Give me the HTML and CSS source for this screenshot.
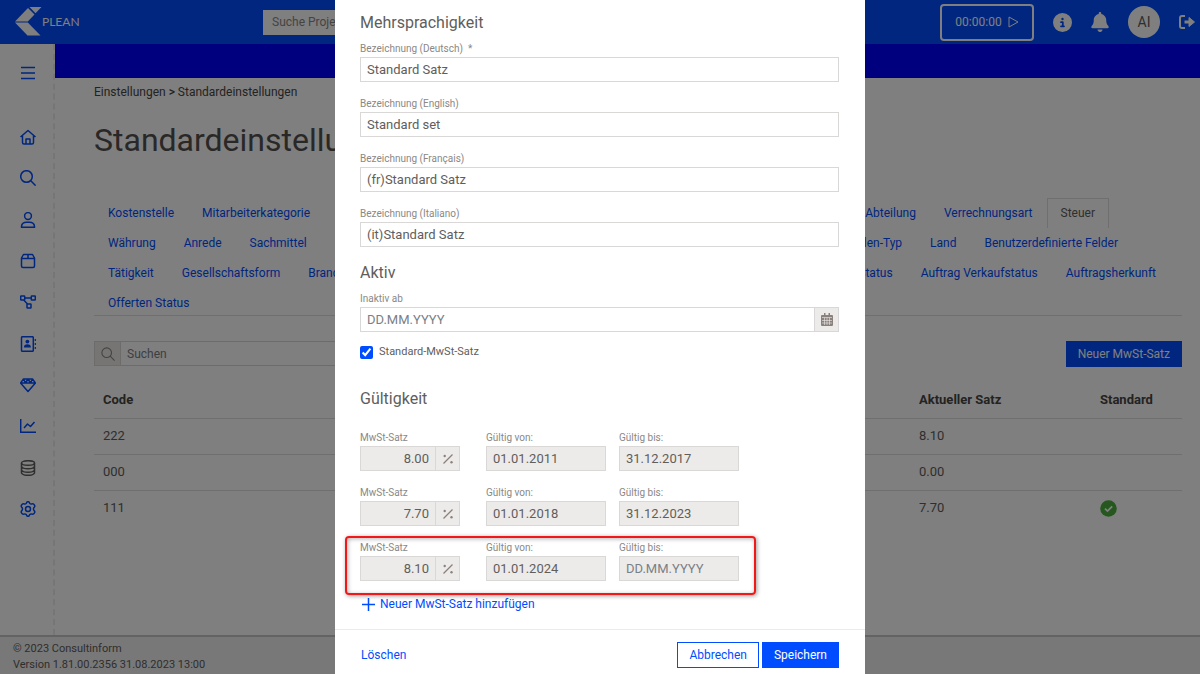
FILE: index.html
```html
<!DOCTYPE html>
<html lang="de">
<head>
<meta charset="utf-8">
<title>Plean – Standardeinstellungen</title>
<link rel="stylesheet" href="styles.css">
</head>
<body>
<div class="app">
  <header class="topbar">
    <a class="brand" href="#" aria-label="Plean">
      <svg width="27" height="30" viewBox="0 0 27 30" fill="currentColor"><path d="M14.500 0H26.500L20.500 6.200z"/><path d="M13 1L19.500 7.500 12.800 14.500H0z"/><path d="M0 15.500h12.800L25.500 28.500H12.500z"/></svg>
      <span>PLEAN</span>
    </a>
    <input class="topsearch" type="text" placeholder="Suche Projekte, Kunden" aria-label="Suche">
    <div class="tools">
      <button class="timer" type="button">00:00:00
        <svg width="11" height="12" viewBox="0 0 11 12" fill="none" stroke="currentColor"><path d="M1 1l9 5-9 5z"/></svg>
      </button>
      <button class="tool" type="button" aria-label="Info"><svg width="19" height="19" viewBox="0 0 512 512" fill="currentColor"><path d="M256 512A256 256 0 1 0 256 0a256 256 0 1 0 0 512zM216 336h24V272H216a24 24 0 0 1 0-48h48c13.300 0 24 10.700 24 24v88h8a24 24 0 0 1 0 48H216a24 24 0 0 1 0-48zm40-208a32 32 0 1 1 0 64 32 32 0 1 1 0-64z"/></svg></button>
      <button class="tool" type="button" aria-label="Mitteilungen"><svg width="18" height="20" viewBox="0 0 448 512" fill="currentColor"><path d="M224 0c-17.700 0-32 14.300-32 32v19.200C119 66 64 130.600 64 208v18.800c0 47-17.300 92.400-48.500 127.600l-7.400 8.300A32 32 0 0 0 32 416H416a32 32 0 0 0 23.900-53.300l-7.400-8.300C401.300 319.200 384 273.900 384 226.800V208c0-77.400-55-142-128-156.800V32c0-17.700-14.300-32-32-32zm45.300 493.300A64 64 0 0 0 288 448H160a64 64 0 0 0 109.300 45.300z"/></svg></button>
      <button class="avatar" type="button">AI</button>
      <button class="tool" type="button" aria-label="Abmelden"><svg width="16" height="16" viewBox="0 0 16 16" fill="none" stroke="currentColor" stroke-width="2"><path d="M6 2H3Q1 2 1 4v8q0 2 2 2h3"/><path d="M5.500 8H10" stroke-width="3"/><path d="M10 3.500L15.500 8 10 12.500z" fill="currentColor" stroke-width="1" stroke-linejoin="round"/></svg></button>
    </div>
  </header>

  <div class="columns">
    <nav class="sidebar" aria-label="Hauptnavigation">
      <a class="menu" href="#" aria-label="Menü"><svg width="16" height="16" viewBox="0 0 16 16"><path d="M1 2.500h14M1 8h14M1 13.500h14"/></svg></a>
      <div class="icons">
        <a href="#" aria-label="Start"><svg width="16" height="16" viewBox="0 0 16 16"><path d="M.5 8L8 1.500 15.500 8M2.500 6.500v7q0 1.500 1.500 1.500h8q1.500 0 1.500-1.500v-7M6 15v-5h4v5"/></svg></a>
        <a href="#" aria-label="Suche"><svg width="16" height="16" viewBox="0 0 16 16"><circle cx="6.500" cy="6.500" r="5.800"/><path d="M10.800 10.800l4.800 4.800"/></svg></a>
        <a href="#" aria-label="Personen"><svg width="16" height="16" viewBox="0 0 16 16"><circle cx="8" cy="4" r="3.400"/><path d="M1.500 15.300v-1q.5-4 5-4h3q4.500 0 5 4v1z"/></svg></a>
        <a href="#" aria-label="Produkte"><svg width="16" height="16" viewBox="0 0 16 16"><path d="M1.500 5L3.500 1.500h9l2 3.500v8q0 1.500-1.500 1.500H3q-1.500 0-1.500-1.500zM1.500 5.500h13M8 1.500v4"/></svg></a>
        <a href="#" aria-label="Prozesse"><svg width="16" height="16" viewBox="0 0 16 16"><rect x=".7" y="2" width="4" height="4" rx=".5"/><rect x="11.300" y="2" width="4" height="4" rx=".5"/><rect x="7" y="10" width="4" height="4" rx=".5"/><path d="M4.700 4h6.600M3.700 6L7.500 10"/></svg></a>
        <a href="#" aria-label="Adressen"><svg width="16" height="16" viewBox="0 0 16 16"><rect x="1.500" y=".7" width="11.800" height="14.600" rx="1"/><circle class="solid" cx="7.400" cy="5.600" r="1.900"/><path class="solid" d="M3.900 11.500q0-3.200 3.500-3.200t3.500 3.200z"/><path d="M15.300 3v2M15.300 7v2M15.300 11v2" stroke-width="1.200"/></svg></a>
        <a href="#" aria-label="Werte"><svg width="16" height="16" viewBox="0 0 16 16"><path d="M3.500 2h9l3 4L8 14.500.5 6zM.5 6h15M3.500 2l2 4L8 2l2.500 4 2-4"/></svg></a>
        <a href="#" aria-label="Berichte"><svg width="16" height="16" viewBox="0 0 16 16"><path d="M.7 1v13.300H16M4 10l3.500-4 3 2.500L14.500 4"/></svg></a>
        <a class="current" href="#" aria-label="Stammdaten"><svg width="16" height="16" viewBox="0 0 16 16"><ellipse cx="8" cy="3" rx="6.500" ry="2.300"/><path d="M1.500 3v10q1 2.300 6.500 2.300t6.500-2.300V3M1.500 6.500q1 2.300 6.500 2.300t6.500-2.300M1.500 10q1 2.300 6.500 2.300t6.500-2.300"/></svg></a>
        <a href="#" aria-label="Einstellungen"><svg width="16" height="16" viewBox="0 0 16 16"><circle cx="8" cy="8" r="2.500"/><path d="M6.300 2.500Q6.500.7 8 .7t1.700 1.800q1 .8 2.300.4 1.500-.5 2.500 1.200.8 1.600-.6 2.600-.8 1.300 0 2.600 1.400 1 .6 2.600-1 1.700-2.500 1.200-1.300-.4-2.300.4-.2 1.800-1.700 1.800t-1.700-1.800q-1-.8-2.300-.4-1.500.5-2.500-1.200-.8-1.600.6-2.600.8-1.300 0-2.600Q.7 5.700 1.500 4.100q1-1.700 2.500-1.200 1.300.4 2.300-.4z"/></svg></a>
      </div>
    </nav>

    <div class="content">
      <div class="band"></div>
      <main class="page">
        <nav class="crumbs" aria-label="Pfad"><a href="#">Einstellungen</a> <b>&gt;</b> <a href="#">Standardeinstellungen</a></nav>
        <h1>Standardeinstellungen</h1>
        <div class="tabs">
          <div class="tabrow inset-l"><a href="#">Kostenstelle</a><a href="#">Mitarbeiterkategorie</a><span class="spacer"></span><a href="#">Abteilung</a><a href="#">Verrechnungsart</a><a class="active" href="#" aria-current="page">Steuer</a></div>
          <div class="tabrow inset-m"><a href="#">Währung</a><a href="#">Anrede</a><a href="#">Sachmittel</a><span class="spacer"></span><a href="#">Kunden-Typ</a><a href="#">Land</a><a href="#">Benutzerdefinierte Felder</a></div>
          <div class="tabrow inset-s"><a href="#">Tätigkeit</a><a href="#">Gesellschaftsform</a><a href="#">Branche</a><span class="spacer"></span><a href="#">Auftrag Status</a><a href="#">Auftrag Verkaufstatus</a><a href="#">Auftragsherkunft</a></div>
          <div class="tabrow"><a href="#">Offerten Status</a></div>
        </div>
        <div class="actions">
          <div class="group filter">
            <span class="addon"><svg width="14" height="14" viewBox="0 0 16 16" fill="none" stroke="currentColor" stroke-width="1.300"><circle cx="6.500" cy="6.500" r="5.500"/><path d="M10.500 10.500l5 5"/></svg></span>
            <input class="input" type="text" placeholder="Suchen" aria-label="Suchen">
          </div>
          <button class="btn primary" type="button">Neuer MwSt-Satz</button>
        </div>
        <table class="rates">
          <thead><tr><th>Code</th><th class="rate">Aktueller Satz</th><th class="std">Standard</th></tr></thead>
          <tbody>
            <tr><td>222</td><td>8.10</td><td></td></tr>
            <tr><td>000</td><td>0.00</td><td></td></tr>
            <tr><td>111</td><td>7.70</td><td><svg class="ok" width="17" height="17" viewBox="0 0 17 17" role="img" aria-label="Ja"><circle cx="8.500" cy="8.500" r="8.300" fill="#4caf3c"/><path d="M5 8.700l2.500 2.400L12.200 6.300" fill="none" stroke="#fff" stroke-width="1.800"/></svg></td></tr>
          </tbody>
        </table>
      </main>
    </div>
  </div>

  <footer class="bottom">© 2023 Consultinform<br>Version 1.81.00.2356 31.08.2023 13:00</footer>
</div>

<div class="backdrop">
  <form class="modal" role="dialog" aria-label="MwSt-Satz bearbeiten">
    <div class="modal-body">
      <h2>Mehrsprachigkeit</h2>
      <div class="fields">
        <div class="field"><label for="de">Bezeichnung (Deutsch) &nbsp;*</label><input class="input" id="de" type="text" value="Standard Satz"></div>
        <div class="field"><label for="en">Bezeichnung (English)</label><input class="input" id="en" type="text" value="Standard set"></div>
        <div class="field"><label for="fr">Bezeichnung (Français)</label><input class="input" id="fr" type="text" value="(fr)Standard Satz"></div>
        <div class="field"><label for="it">Bezeichnung (Italiano)</label><input class="input" id="it" type="text" value="(it)Standard Satz"></div>
      </div>
      <h2 class="next">Aktiv</h2>
      <div class="field"><label for="inactive">Inaktiv ab</label>
        <div class="group">
          <input class="input" id="inactive" type="text" placeholder="DD.MM.YYYY">
          <button class="addon end" type="button" aria-label="Kalender"><svg width="12" height="13" viewBox="0 0 12 13"><path fill="#8a817c" d="M1 2h2V0h1.500v2h3V0H9v2h2q1 0 1 1v9q0 1-1 1H1q-1 0-1-1V3q0-1 1-1z"/><path stroke="#edebe9" fill="none" d="M1 4.500h10M1 7.500h10M1 10h10M3.500 4.500V12M6 4.500V12M8.500 4.500V12" stroke-width=".6"/></svg></button>
        </div>
      </div>
      <label class="check"><input type="checkbox" checked>Standard-MwSt-Satz</label>
      <h2 class="validity">Gültigkeit</h2>
      <div class="fields">
        <div class="period">
          <div class="field"><label for="r1">MwSt-Satz</label><div class="group"><input class="input num" id="r1" type="text" value="8.00" disabled><span class="addon end"><svg class="pct" width="10" height="10" viewBox="0 0 10 10"><path d="M.5 9.500l9-9"/><circle cx="1.700" cy="2" r="1.200"/><circle cx="8.500" cy="8.300" r="1.200"/></svg></span></div></div>
          <div class="field"><label for="f1">Gültig von:</label><input class="input" id="f1" type="text" value="01.01.2011" disabled></div>
          <div class="field"><label for="t1">Gültig bis:</label><input class="input" id="t1" type="text" value="31.12.2017" disabled></div>
        </div>
        <div class="period">
          <div class="field"><label for="r2">MwSt-Satz</label><div class="group"><input class="input num" id="r2" type="text" value="7.70" disabled><span class="addon end"><svg class="pct" width="10" height="10" viewBox="0 0 10 10"><path d="M.5 9.500l9-9"/><circle cx="1.700" cy="2" r="1.200"/><circle cx="8.500" cy="8.300" r="1.200"/></svg></span></div></div>
          <div class="field"><label for="f2">Gültig von:</label><input class="input" id="f2" type="text" value="01.01.2018" disabled></div>
          <div class="field"><label for="t2">Gültig bis:</label><input class="input" id="t2" type="text" value="31.12.2023" disabled></div>
        </div>
        <div class="period marked">
          <div class="field"><label for="r3">MwSt-Satz</label><div class="group"><input class="input num" id="r3" type="text" value="8.10" disabled><span class="addon end"><svg class="pct" width="10" height="10" viewBox="0 0 10 10"><path d="M.5 9.500l9-9"/><circle cx="1.700" cy="2" r="1.200"/><circle cx="8.500" cy="8.300" r="1.200"/></svg></span></div></div>
          <div class="field"><label for="f3">Gültig von:</label><input class="input" id="f3" type="text" value="01.01.2024" disabled></div>
          <div class="field"><label for="t3">Gültig bis:</label><input class="input" id="t3" type="text" placeholder="DD.MM.YYYY" disabled></div>
        </div>
      </div>
      <button class="add" type="button"><svg width="13" height="13" viewBox="0 0 13 13" stroke="currentColor" stroke-width="1.500"><path d="M0 6.500h13M6.500 0v13"/></svg>Neuer MwSt-Satz hinzufügen</button>
    </div>
    <div class="modal-foot">
      <button class="link" type="button">Löschen</button>
      <button class="btn outline" type="button">Abbrechen</button>
      <button class="btn primary" type="submit">Speichern</button>
    </div>
  </form>
</div>
</body>
</html>
```

FILE: styles.css
```css
* { box-sizing: border-box; }

body {
  margin: 0;
  font: 13px/20px Roboto, "Liberation Sans", sans-serif;
  color: #605e5c;
  background: #fff;
}

a { color: inherit; text-decoration: none; }
button, input { font: inherit; color: inherit; margin: 0; }
button { border: 0; padding: 0; background: none; }
svg { display: block; flex: none; }

.app { display: flex; flex-direction: column; min-height: 100vh; }

/* Top bar */
.topbar {
  display: flex;
  align-items: center;
  height: 44px;
  padding: 0 5px 0 15px;
  background: #004dff;
  color: #fff;
}
.brand {
  display: flex;
  align-items: center;
  width: 248px;
  font: 12px/20px Lato, Roboto, sans-serif;
}
.topsearch {
  width: 300px;
  height: 25px;
  padding: 0 9px;
  border: 0;
  background: #fff;
  font-size: 12px;
}
.topsearch::placeholder { color: #8a8886; }
.tools { display: flex; align-items: center; gap: 19px; margin-left: auto; }
.timer {
  display: flex;
  align-items: center;
  justify-content: center;
  gap: 6px;
  width: 94px;
  height: 37px;
  border: 2px solid #fff;
  border-radius: 4px;
  font-size: 12px;
}
.avatar {
  width: 32px;
  height: 32px;
  border-radius: 50%;
  background: #fff;
  color: #605e5c;
  font-size: 14px;
}

/* Body columns */
.columns { display: flex; flex: 1; }
.sidebar {
  display: flex;
  flex-direction: column;
  align-items: center;
  gap: 48px;
  width: 55px;
  padding: 21px 0 0 2px;
  border-right: 2px dashed #ececec;
  color: #004dff;
}
.sidebar svg { fill: none; stroke: currentColor; stroke-width: 1.5; stroke-linejoin: round; }
.sidebar .solid { fill: currentColor; stroke: none; }
.icons { display: flex; flex-direction: column; justify-content: space-between; height: 388px; }
.current { color: #605e5c; }
.content { flex: 1; min-width: 0; }
.band { height: 34px; background: #00f; }
.page { padding: 4px 18px 0 39px; }

.crumbs { font-size: 12px; color: #484644; }
.crumbs b { font-weight: 500; }
h1 { margin: 18px 0 0; font-size: 32px; line-height: 40px; font-weight: 400; color: #55514f; }

.tabs {
  display: grid;
  gap: 4px;
  margin-top: 38px;
  padding-bottom: 1px;
  border-bottom: 1px solid #e1dfdd;
  font-size: 12px;
  color: #004dff;
}
.tabrow { display: flex; align-items: flex-start; height: 26px; }
.tabrow a { padding: 5px 14px; white-space: nowrap; }
.tabrow .spacer { flex: 1; }
.tabrow .active { border: 1px solid #e1dfdd; border-bottom: 0; padding: 4px 13px 5px; color: #605e5c; }
.inset-l { padding-right: 73px; }
.inset-m { padding-right: 50px; }
.inset-s { padding-right: 12px; }

.actions { display: flex; justify-content: space-between; margin-top: 25px; }
.filter { width: 360px; }
.filter .input { font-size: 12px; }

.rates { width: 100%; margin-top: 15px; border-collapse: collapse; table-layout: fixed; }
.rates th, .rates td { height: 36px; padding: 0 9px; text-align: left; border-bottom: 1px solid #e1dfdd; }
.rates th { color: #484644; font-weight: 700; }
.rates tr:last-child td { border-bottom: 0; }
.rates .rate { width: 181px; }
.rates .std { width: 91px; }

.bottom {
  padding: 4px 13px 1px;
  border-top: 2px solid #c8c6c4;
  background: #f0f0f0;
  font-size: 11px;
  line-height: 16px;
}

/* Form parts */
.input {
  display: block;
  width: 100%;
  min-width: 0;
  height: 25px;
  padding: 0 6px;
  border: 1px solid #dad8d6;
  border-radius: 0;
  background: #fff;
}
.input::placeholder { color: #7a8087; opacity: 1; }
.input:disabled { background: #edebe9; color: #605e5c; }
.input.num { text-align: right; }
.group { display: flex; }
.addon {
  display: flex;
  flex: none;
  align-items: center;
  justify-content: center;
  width: 26px;
  height: 25px;
  border: 1px solid #dad8d6;
  border-right: 0;
  background: #edebe9;
  color: #8a8886;
}
.addon.end { width: 24px; border: 1px solid #dad8d6; border-left: 0; }
.pct { fill: #8a817c; stroke: #8a817c; stroke-width: 1.2; }
.pct circle { stroke: none; }

.btn { height: 26px; padding: 0 11px; border: 1px solid #004dff; font-size: 12px; white-space: nowrap; }
.primary { background: #004dff; color: #fff; }
.outline { background: #fff; color: #004dff; }

/* Dialog */
.backdrop {
  position: fixed;
  inset: 0;
  display: flex;
  justify-content: center;
  overflow: hidden;
  background: rgba(0, 0, 0, .5);
}
.modal { display: flex; flex-direction: column; width: 530px; background: #fff; }
.modal-body { flex: 1; padding: 11px 26px 0 25px; }
h2 { margin: 0 0 5px; font-size: 16px; line-height: 24px; font-weight: 400; }
h2.next { margin-top: 14px; }
h2.validity { margin: 25px 0 18px; }
.fields { display: grid; gap: 13px; }
.field label { display: block; font-size: 10px; line-height: 17px; color: #8a8886; }
.field .input { font-size: 13px; }
.check { display: flex; align-items: center; gap: 6px; margin-top: 10px; font-size: 11px; }
.check input { width: 13px; height: 13px; accent-color: #004dff; }
.period { display: grid; grid-template-columns: 113px 120px 120px; column-gap: 13px; position: relative; }
.period .field:first-child { padding-right: 13px; }
.marked::after {
  content: "";
  position: absolute;
  inset: -3px 83px -14px -15px;
  border: 2px solid #f01818;
  border-radius: 4px;
  box-shadow: 1px 1px 4px rgba(0, 0, 0, .4), inset 1px 1px 4px rgba(0, 0, 0, .3);
  pointer-events: none;
}
.add { display: flex; align-items: center; gap: 5px; margin-top: 13px; padding-left: 2px; font-size: 12px; color: #004dff; }
.modal-foot {
  display: flex;
  align-items: center;
  gap: 3px;
  padding: 12px 26px 6px;
  border-top: 1px solid #edebe9;
}
.link { margin-right: auto; font-size: 12px; color: #004dff; }
```
